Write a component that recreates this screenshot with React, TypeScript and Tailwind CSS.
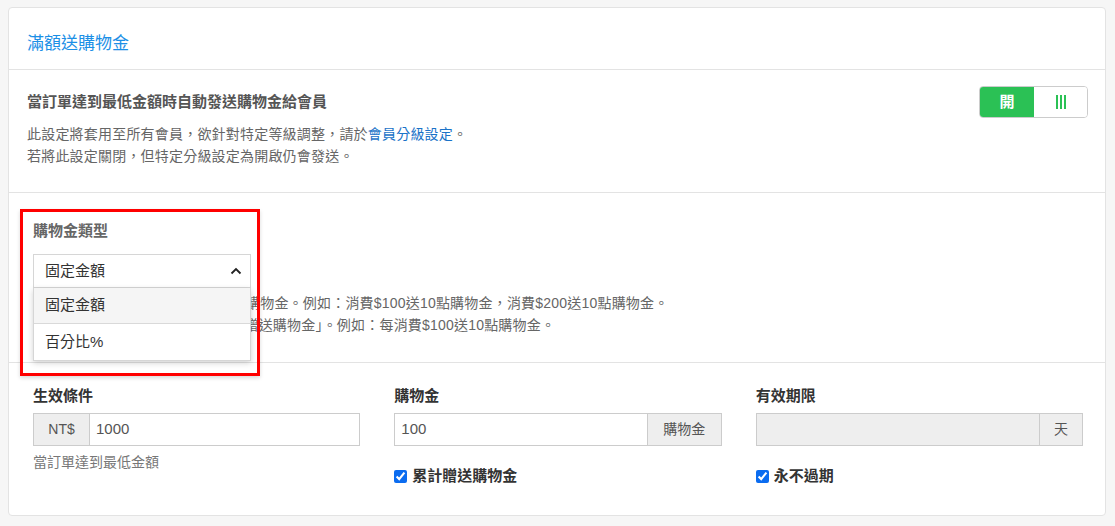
import React from "react";

const font = { fontFamily: '"Liberation Sans", "Noto Sans CJK TC", "Noto Sans", sans-serif' };

export default function App() {
  return (
    <div className="min-h-[526px] w-[1115px] bg-[#f6f6f6] pt-[7px] pl-[8px]" style={font}>
      <div className="w-[1098px] h-[509px] bg-white border border-[#e3e3e3] rounded-[4px] flex flex-col">
        {/* header */}
        <div className="h-[62px] flex items-center px-[18px] border-b border-[#e3e3e3]">
          <div className="text-[17px] text-[#1b8fe6] leading-[24px] mt-[10px]">滿額送購物金</div>
        </div>

        {/* section 2 */}
        <div className="flex justify-between items-start pt-[16px] pr-[17px] pl-[18px] pb-[25px] border-b border-[#e3e3e3]">
          <div className="pt-[4px]">
            <div className="text-[15px] font-bold text-[#555] leading-[24px]">當訂單達到最低金額時自動發送購物金給會員</div>
            <div className="mt-[9px] text-[14px] text-[#666] leading-[22px] tracking-[0.2px]">
              <div>
                此設定將套用至所有會員，欲針對特定等級調整，請於
                <span className="text-[#1a73c8]">會員分級設定</span>。
              </div>
              <div>若將此設定關閉，但特定分級設定為開啟仍會發送。</div>
            </div>
          </div>
          <div className="flex w-[109px] h-[32px] border border-[#ccc] rounded-[4px] overflow-hidden">
            <div className="w-[54px] bg-[#2bc155] flex items-center justify-center text-white text-[15px] font-bold">開</div>
            <div className="flex-1 bg-white flex items-center justify-center gap-[2px]">
              <span className="w-[2px] h-[14px] bg-[#2bc155]" />
              <span className="w-[2px] h-[14px] bg-[#2bc155]" />
              <span className="w-[2px] h-[14px] bg-[#2bc155]" />
            </div>
          </div>
        </div>

        {/* section 3 */}
        <div className="relative pt-[27px] pl-[24px] pb-[26px] border-b border-[#e3e3e3]">
          <div className="text-[15px] font-bold text-[#666] leading-[22px]">購物金類型</div>
          <div className="relative mt-[12px] w-[218px]">
            <div className="h-[34px] border border-[#d6d6d6] flex items-center justify-between pl-[11px] pr-[8px] text-[15px] text-[#333] bg-white">
              <span>固定金額</span>
              <svg width="12" height="8" viewBox="0 0 12 8" fill="none">
                <path d="M1.5 6.5 L6 2 L10.5 6.5" stroke="#222" strokeWidth="1.8" />
              </svg>
            </div>
            <div className="absolute left-0 top-[34px] w-[218px] bg-white border border-t-0 border-[#d6d6d6] shadow-[0_2px_6px_rgba(0,0,0,0.18)] z-10 text-[15px] text-[#333]">
              <div className="h-[36px] flex items-center pl-[11px] bg-[#f5f5f5] border-b border-[#d9d9d9]">固定金額</div>
              <div className="h-[36px] flex items-center pl-[11px]">百分比%</div>
            </div>
          </div>
          <div className="mt-[4px] text-[14px] text-[#666] leading-[22px] tracking-[0.2px]">
            <div>固定金額：訂單滿額即送固定點數購物金。例如：消費$100送10點購物金，消費$200送10點購物金。</div>
            <div>百分比%：按比例贈送，即「累計贈送購物金」。例如：每消費$100送10點購物金。</div>
          </div>
          <div className="absolute left-[11px] top-[16px] w-[240px] h-[167px] border-[3px] border-[#ff0000] z-20 pointer-events-none shadow-[0_2px_4px_rgba(0,0,0,0.15)]" />
        </div>

        {/* section 4 */}
        <div className="grid grid-cols-3 gap-[34px] pt-[22px] pl-[24px] pr-[22px]">
          <div>
            <div className="text-[15px] font-bold text-[#333] leading-[22px]">生效條件</div>
            <div className="mt-[6px] flex h-[33px] border border-[#ccc]">
              <div className="w-[56px] bg-[#eee] border-r border-[#ccc] flex items-center justify-center text-[14px] text-[#555]">NT$</div>
              <div className="flex-1 flex items-center pl-[6px] text-[15px] text-[#555]">1000</div>
            </div>
            <div className="mt-[5px] text-[14px] text-[#777] leading-[22px]">當訂單達到最低金額</div>
          </div>
          <div>
            <div className="text-[15px] font-bold text-[#333] leading-[22px]">購物金</div>
            <div className="mt-[6px] flex h-[33px] border border-[#ccc]">
              <div className="flex-1 flex items-center pl-[6px] text-[15px] text-[#555]">100</div>
              <div className="w-[74px] bg-[#eee] border-l border-[#ccc] flex items-center justify-center text-[14px] text-[#555]">購物金</div>
            </div>
            <label className="mt-[19px] flex items-center gap-[5px] text-[15px] font-bold text-[#333] leading-[22px]">
              <input type="checkbox" checked readOnly className="w-[13px] h-[13px] accent-[#0b6cf0] m-0" />
              累計贈送購物金
            </label>
          </div>
          <div>
            <div className="text-[15px] font-bold text-[#333] leading-[22px]">有效期限</div>
            <div className="mt-[6px] flex h-[33px] border border-[#ccc] bg-[#eee]">
              <div className="flex-1" />
              <div className="w-[43px] border-l border-[#ccc] flex items-center justify-center text-[14px] text-[#555]">天</div>
            </div>
            <label className="mt-[19px] flex items-center gap-[5px] text-[15px] font-bold text-[#333] leading-[22px]">
              <input type="checkbox" checked readOnly className="w-[13px] h-[13px] accent-[#0b6cf0] m-0" />
              永不過期
            </label>
          </div>
        </div>
      </div>
    </div>
  );
}
